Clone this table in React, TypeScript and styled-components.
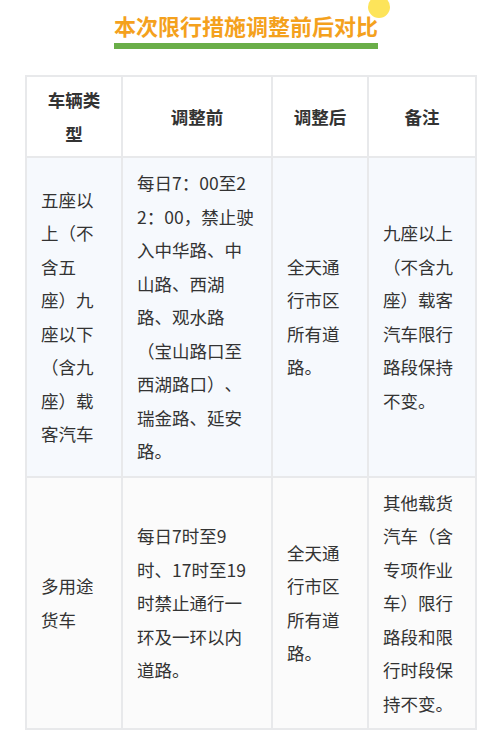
import React from 'react';
import styled, { createGlobalStyle } from 'styled-components';

const GlobalStyle = createGlobalStyle`
  body {
    margin: 0;
    background: #ffffff;
    font-family: "Noto Sans CJK SC", "Noto Sans", sans-serif;
    color: #333333;
  }
`;

const Page = styled.div`
  width: 500px;
  padding: 10px 25px 20px;
  box-sizing: border-box;
`;

const Headline = styled.div`
  display: flex;
  justify-content: center;
  margin-bottom: 26px;
`;

const Title = styled.h1`
  position: relative;
  z-index: 0;
  margin: 0 0 0 -8px;
  padding-bottom: 3px;
  font-size: 22px;
  line-height: 30px;
  font-weight: 700;
  color: #f4a11d;
  border-bottom: 6px solid #6aae48;

  &::before {
    content: '';
    position: absolute;
    z-index: -1;
    top: -14px;
    right: -12px;
    width: 22px;
    height: 22px;
    border-radius: 50%;
    background: #fde45a;
  }
`;

const Table = styled.table`
  width: 450px;
  table-layout: fixed;
  border-collapse: collapse;
  font-size: 17.5px;
  line-height: 33.5px;
  text-spacing-trim: space-all;
`;

const HeadCell = styled.th`
  background: #ffffff;
  border: 2px solid #e8e9eb;
  padding: 6px 14px;
  font-weight: 700;
  text-align: center;
  vertical-align: middle;
  color: #333333;
`;

const Row = styled.tr<{ $tone: 'blue' | 'grey' }>`
  background: ${(p) => (p.$tone === 'blue' ? '#f6f9fd' : '#fbfbfb')};
`;

const Cell = styled.td`
  border: 2px solid #e8e9eb;
  padding: 8px 14px;
  text-align: left;
  vertical-align: middle;
  word-break: break-all;
  color: #333333;
`;

const columns = [96, 150, 96, 108];
const heads = ['车辆类型', '调整前', '调整后', '备注'];

const rows: { tone: 'blue' | 'grey'; cells: string[] }[] = [
  {
    tone: 'blue',
    cells: [
      '五座以上（不含五座）九座以下（含九座）载客汽车',
      '每日7：00至22：00，禁止驶入中华路、中山路、西湖路、观水路（宝山路口至西湖路口）、瑞金路、延安路。',
      '全天通行市区所有道路。',
      '九座以上（不含九座）载客汽车限行路段保持不变。',
    ],
  },
  {
    tone: 'grey',
    cells: [
      '多用途货车',
      '每日7时至9时、17时至19时禁止通行一环及一环以内道路。',
      '全天通行市区所有道路。',
      '其他载货汽车（含专项作业车）限行路段和限行时段保持不变。',
    ],
  },
];

export default function App() {
  return (
    <Page>
      <GlobalStyle />
      <Headline>
        <Title>本次限行措施调整前后对比</Title>
      </Headline>
      <Table>
        <colgroup>
          {columns.map((w, i) => (
            <col key={i} style={{ width: w }} />
          ))}
        </colgroup>
        <thead>
          <tr>
            {heads.map((h) => (
              <HeadCell key={h}>{h}</HeadCell>
            ))}
          </tr>
        </thead>
        <tbody>
          {rows.map((row, i) => (
            <Row key={i} $tone={row.tone}>
              {row.cells.map((c, j) => (
                <Cell key={j}>{c}</Cell>
              ))}
            </Row>
          ))}
        </tbody>
      </Table>
    </Page>
  );
}
